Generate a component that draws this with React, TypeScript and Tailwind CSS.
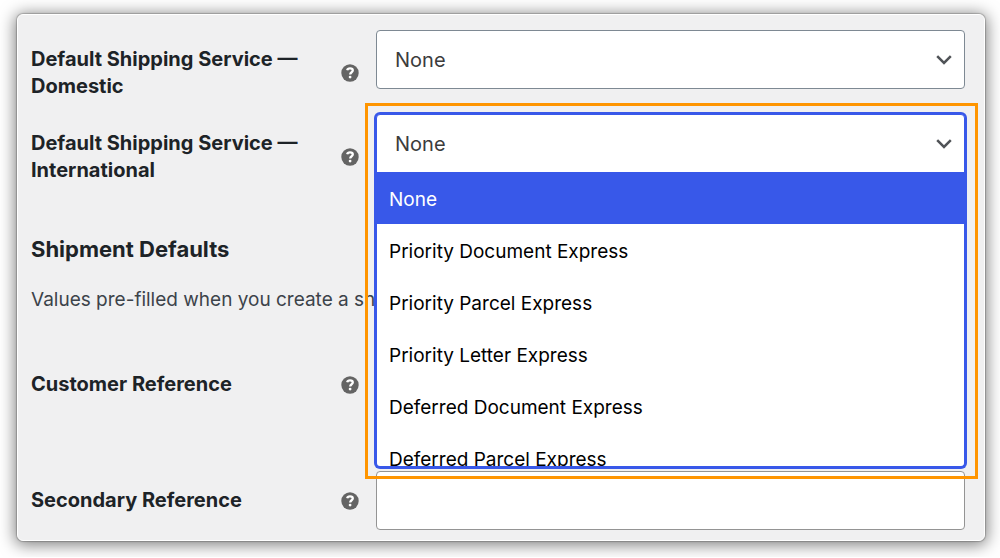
import { useId, useState } from 'react';
import type { MouseEvent, ReactNode } from 'react';
import clsx from 'clsx';

const SERVICES = [
  'None',
  'Priority Document Express',
  'Priority Parcel Express',
  'Priority Letter Express',
  'Deferred Document Express',
  'Deferred Parcel Express',
];

function HelpTip({ label }: { label: string }) {
  return (
    <button type="button" aria-label={`Help: ${label}`} className="shrink-0">
      <svg viewBox="0 0 18 18" className="size-[18px]" fill="none">
        <circle cx="9" cy="9" r="8.7" fill="#646464" />
        <path
          d="M6.2 6.2C6.5 4.9 7.5 4.4 9 4.4c1.7 0 2.8.7 2.8 2.1 0 1.8-2.6 1.7-2.6 4"
          stroke="#fff"
          strokeWidth="2.3"
        />
        <circle cx="9.1" cy="13.1" r="1.4" fill="#fff" />
      </svg>
    </button>
  );
}

function Chevron() {
  return (
    <svg
      viewBox="0 0 16 10"
      fill="none"
      className="pointer-events-none absolute top-1/2 right-[13px] h-[10px] w-4 -translate-y-1/2"
    >
      <path d="M1.2 1.2 8 8l6.8-6.8" stroke="#505357" strokeWidth="2.5" />
    </svg>
  );
}

interface FieldRowProps {
  id: string;
  label: string;
  children: ReactNode;
}

/** One settings row: label and help tip on the left, control on the right. */
function FieldRow({ id, label, children }: FieldRowProps) {
  return (
    <div className="flex items-start">
      <div className="flex w-[345px] shrink-0 items-center justify-between pt-4 pr-[17px]">
        <label
          htmlFor={id}
          className="w-72 text-[20px] leading-[27px] font-bold text-[#1d2327]"
        >
          {label}
        </label>
        <HelpTip label={label} />
      </div>
      <div className="relative min-w-0 flex-1">{children}</div>
    </div>
  );
}

interface ServiceSelectProps {
  id: string;
  defaultOpen?: boolean;
  highlighted?: boolean;
}

function ServiceSelect({ id, defaultOpen = false, highlighted = false }: ServiceSelectProps) {
  const [open, setOpen] = useState(defaultOpen);
  const [value, setValue] = useState(SERVICES[0]);
  const listId = useId();

  // The styled list below replaces the browser's own popup.
  const toggle = (e: MouseEvent) => {
    e.preventDefault();
    setOpen((o) => !o);
  };

  return (
    <>
      <select
        id={id}
        value={value}
        onMouseDown={toggle}
        onChange={(e) => setValue(e.target.value)}
        className={clsx(
          'block h-[59px] w-full appearance-none border bg-white pr-10 pl-[18px] text-[20px] text-[#3c3c3c] outline-none',
          open ? 'rounded-t border-[#3858e9] ring-2 ring-[#3858e9]' : 'rounded border-[#7e8993]',
        )}
      >
        {SERVICES.map((s) => (
          <option key={s}>{s}</option>
        ))}
      </select>
      <Chevron />

      {open && (
        <ul
          id={listId}
          role="listbox"
          aria-label="Shipping service"
          className="absolute -inset-x-[2px] top-[58px] z-10 h-[297px] overflow-hidden rounded-b-md border-x-[3px] border-b-[3px] border-[#3858e9] bg-white"
        >
          {SERVICES.map((s) => (
            <li
              key={s}
              role="option"
              aria-selected={s === value}
              onClick={() => {
                setValue(s);
                setOpen(false);
              }}
              className={clsx(
                'flex h-[52px] cursor-pointer items-center px-3 pt-1 text-[19px]',
                s === value ? 'bg-[#3858e9] text-white' : 'text-black',
              )}
            >
              {s}
            </li>
          ))}
        </ul>
      )}

      {highlighted && (
        <div className="pointer-events-none absolute -top-[11px] -right-[13px] -left-[11px] z-20 h-[376px] border-[3px] border-[#ff9500]" />
      )}
    </>
  );
}

function TextField({ id }: { id: string }) {
  return (
    <input
      id={id}
      type="text"
      className="block h-[59px] w-full rounded border border-[#949494] bg-white px-4 text-[20px] text-[#2c3338] outline-none"
    />
  );
}

export default function App() {
  return (
    <div className="bg-white pt-[14px] pr-[15px] pb-4 pl-[17px] font-['Inter','Liberation_Sans',sans-serif]">
      <main className="rounded-md border border-white bg-[#f0f0f1] pt-[15px] pr-[19px] pb-[10px] pl-[13px] shadow-[0_0_1px_1px_rgba(0,0,0,0.2),0_2px_16px_2px_rgba(0,0,0,0.5)]">
        <div className="flex flex-col gap-[14px]">
          <FieldRow id="domestic" label="Default Shipping Service — Domestic">
            <ServiceSelect id="domestic" />
          </FieldRow>
          <FieldRow id="international" label="Default Shipping Service — International">
            <ServiceSelect id="international" defaultOpen highlighted />
          </FieldRow>
        </div>

        <h2 className="mt-[50px] text-[22px] leading-[30px] font-bold text-[#1d2327]">
          Shipment Defaults
        </h2>
        <p className="mt-[22px] text-[19px] leading-[27px] text-[#3c434a]">
          Values pre-filled when you create a shi
        </p>

        <div className="mt-[42px] flex flex-col gap-[57px]">
          <FieldRow id="customer-ref" label="Customer Reference">
            <TextField id="customer-ref" />
          </FieldRow>
          <FieldRow id="secondary-ref" label="Secondary Reference">
            <TextField id="secondary-ref" />
          </FieldRow>
        </div>
      </main>
    </div>
  );
}
